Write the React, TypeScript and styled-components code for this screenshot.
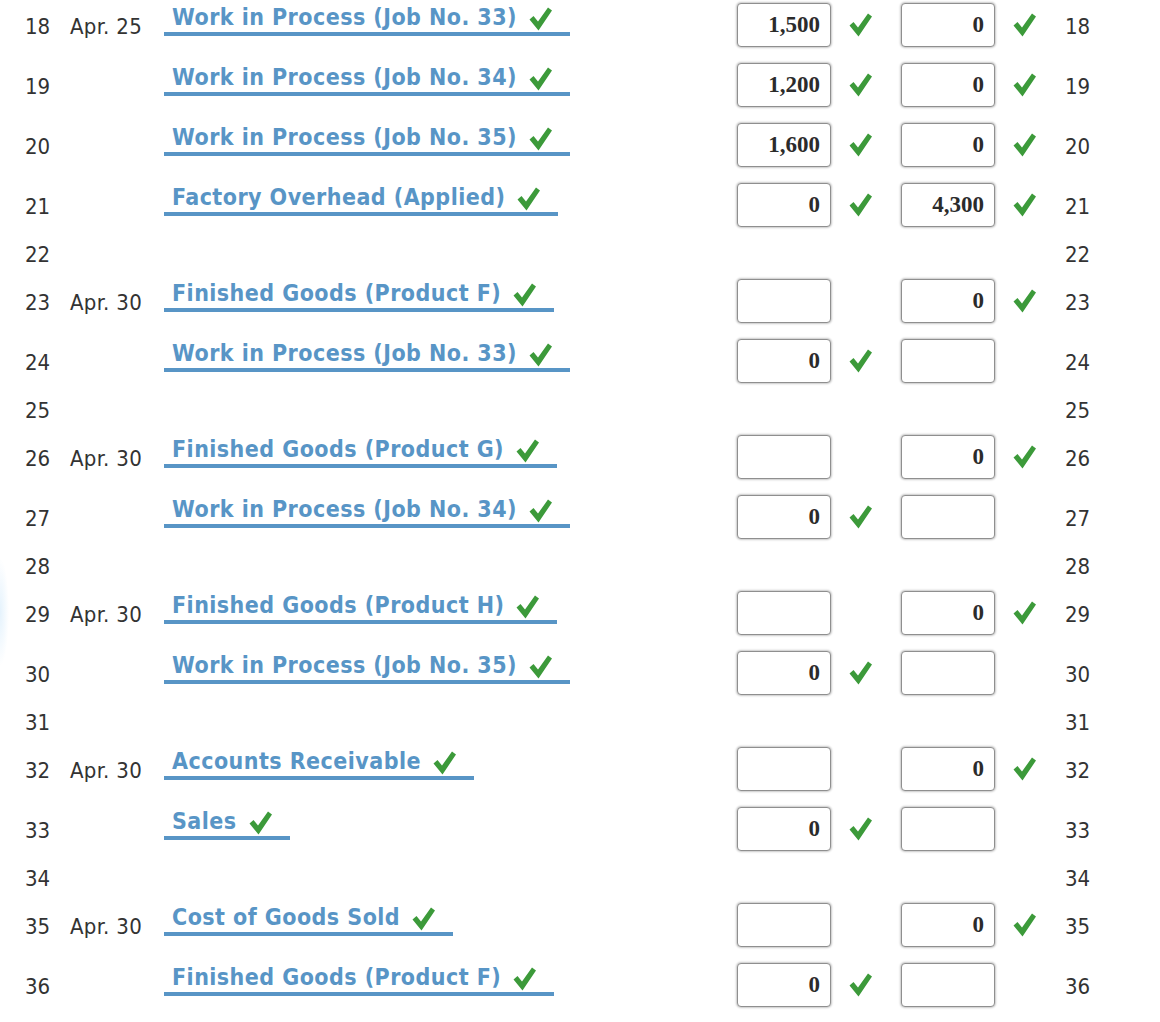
import React from "react";
import styled, { createGlobalStyle } from "styled-components";

const GlobalStyle = createGlobalStyle`
  html, body {
    margin: 0;
    padding: 0;
    background-color: #ffffff;
  }

  body {
    background-image: radial-gradient(ellipse 9px 54px at 0 612px, rgba(150, 205, 245, 0.25), rgba(255, 255, 255, 0));
    background-repeat: no-repeat;
    font-family: "DejaVu Sans Condensed", "DejaVu Sans", sans-serif;
    color: #333333;
  }
`;

const Journal = styled.div`
  display: flex;
  flex-direction: column;
  width: 1160px;
`;

const Row = styled.div<{ $blank?: boolean }>`
  display: flex;
  align-items: center;
  box-sizing: border-box;
  height: ${(p) => (p.$blank ? "36px" : "60px")};
  padding: 0 0 6px 25px;
`;

const LineNo = styled.div`
  width: 45px;
  font-size: 22px;
  line-height: 26px;
`;

const DateCell = styled.div`
  width: 94px;
  font-size: 22px;
  letter-spacing: 0.3px;
  line-height: 26px;
  white-space: nowrap;
`;

const AccountCell = styled.div`
  width: 573px;
  display: flex;
  margin-bottom: 14px;
`;

const Account = styled.div`
  display: inline-flex;
  align-items: flex-start;
  gap: 12px;
  padding: 2px 18px 4px 8px;
  border-bottom: 4px solid #5895c6;
  color: #5895c6;
  font-weight: bold;
  font-size: 23px;
  letter-spacing: 0.45px;
  line-height: 22px;
  white-space: nowrap;
`;

const AccountCheck = styled.span`
  display: inline-flex;
  margin: 1px 0 -3px;
`;

const AmountCell = styled.div`
  width: 164px;
  display: flex;
  align-items: center;
  gap: 18px;
  margin-bottom: 4px;
`;

const AmountInput = styled.input`
  box-sizing: border-box;
  width: 94px;
  height: 44px;
  padding: 0 10px 0 6px;
  border: 1px solid #8f8f8f;
  border-radius: 4px;
  box-shadow: 0 0 2px 1px rgba(0, 0, 0, 0.22);
  background: #ffffff;
  text-align: right;
  font-family: "Liberation Serif", "Times New Roman", serif;
  font-weight: bold;
  font-size: 23px;
  color: #2b2b2b;
  outline: none;
`;

const RightNo = styled.div`
  font-size: 22px;
  line-height: 26px;
`;

function Check() {
  return (
    <svg width="23" height="24" viewBox="0 0 23 24">
      <polygon points="0.5,12.5 4.5,9 9,14.5 19,0.5 23,3.5 9.5,23.5" fill="#3c9a3a" />
    </svg>
  );
}

interface Entry {
  no: number;
  date?: string;
  account?: string;
  debit?: string;
  credit?: string;
}

const entries: Entry[] = [
  { no: 18, date: "Apr. 25", account: "Work in Process (Job No. 33)", debit: "1,500", credit: "0" },
  { no: 19, account: "Work in Process (Job No. 34)", debit: "1,200", credit: "0" },
  { no: 20, account: "Work in Process (Job No. 35)", debit: "1,600", credit: "0" },
  { no: 21, account: "Factory Overhead (Applied)", debit: "0", credit: "4,300" },
  { no: 22 },
  { no: 23, date: "Apr. 30", account: "Finished Goods (Product F)", debit: "", credit: "0" },
  { no: 24, account: "Work in Process (Job No. 33)", debit: "0", credit: "" },
  { no: 25 },
  { no: 26, date: "Apr. 30", account: "Finished Goods (Product G)", debit: "", credit: "0" },
  { no: 27, account: "Work in Process (Job No. 34)", debit: "0", credit: "" },
  { no: 28 },
  { no: 29, date: "Apr. 30", account: "Finished Goods (Product H)", debit: "", credit: "0" },
  { no: 30, account: "Work in Process (Job No. 35)", debit: "0", credit: "" },
  { no: 31 },
  { no: 32, date: "Apr. 30", account: "Accounts Receivable", debit: "", credit: "0" },
  { no: 33, account: "Sales", debit: "0", credit: "" },
  { no: 34 },
  { no: 35, date: "Apr. 30", account: "Cost of Goods Sold", debit: "", credit: "0" },
  { no: 36, account: "Finished Goods (Product F)", debit: "0", credit: "" },
];

function Amount({ value }: { value: string }) {
  return (
    <AmountCell>
      <AmountInput type="text" readOnly value={value} />
      {value !== "" && <Check />}
    </AmountCell>
  );
}

export default function App() {
  return (
    <>
      <GlobalStyle />
      <Journal>
        {entries.map((e) => {
          if (!e.account) {
            return (
              <Row key={e.no} $blank>
                <LineNo>{e.no}</LineNo>
                <DateCell />
                <AccountCell />
                <AmountCell />
                <AmountCell />
                <RightNo>{e.no}</RightNo>
              </Row>
            );
          }
          return (
            <Row key={e.no}>
              <LineNo>{e.no}</LineNo>
              <DateCell>{e.date}</DateCell>
              <AccountCell>
                <Account>
                  {e.account}
                  <AccountCheck>
                    <Check />
                  </AccountCheck>
                </Account>
              </AccountCell>
              <Amount value={e.debit ?? ""} />
              <Amount value={e.credit ?? ""} />
              <RightNo>{e.no}</RightNo>
            </Row>
          );
        })}
      </Journal>
    </>
  );
}
